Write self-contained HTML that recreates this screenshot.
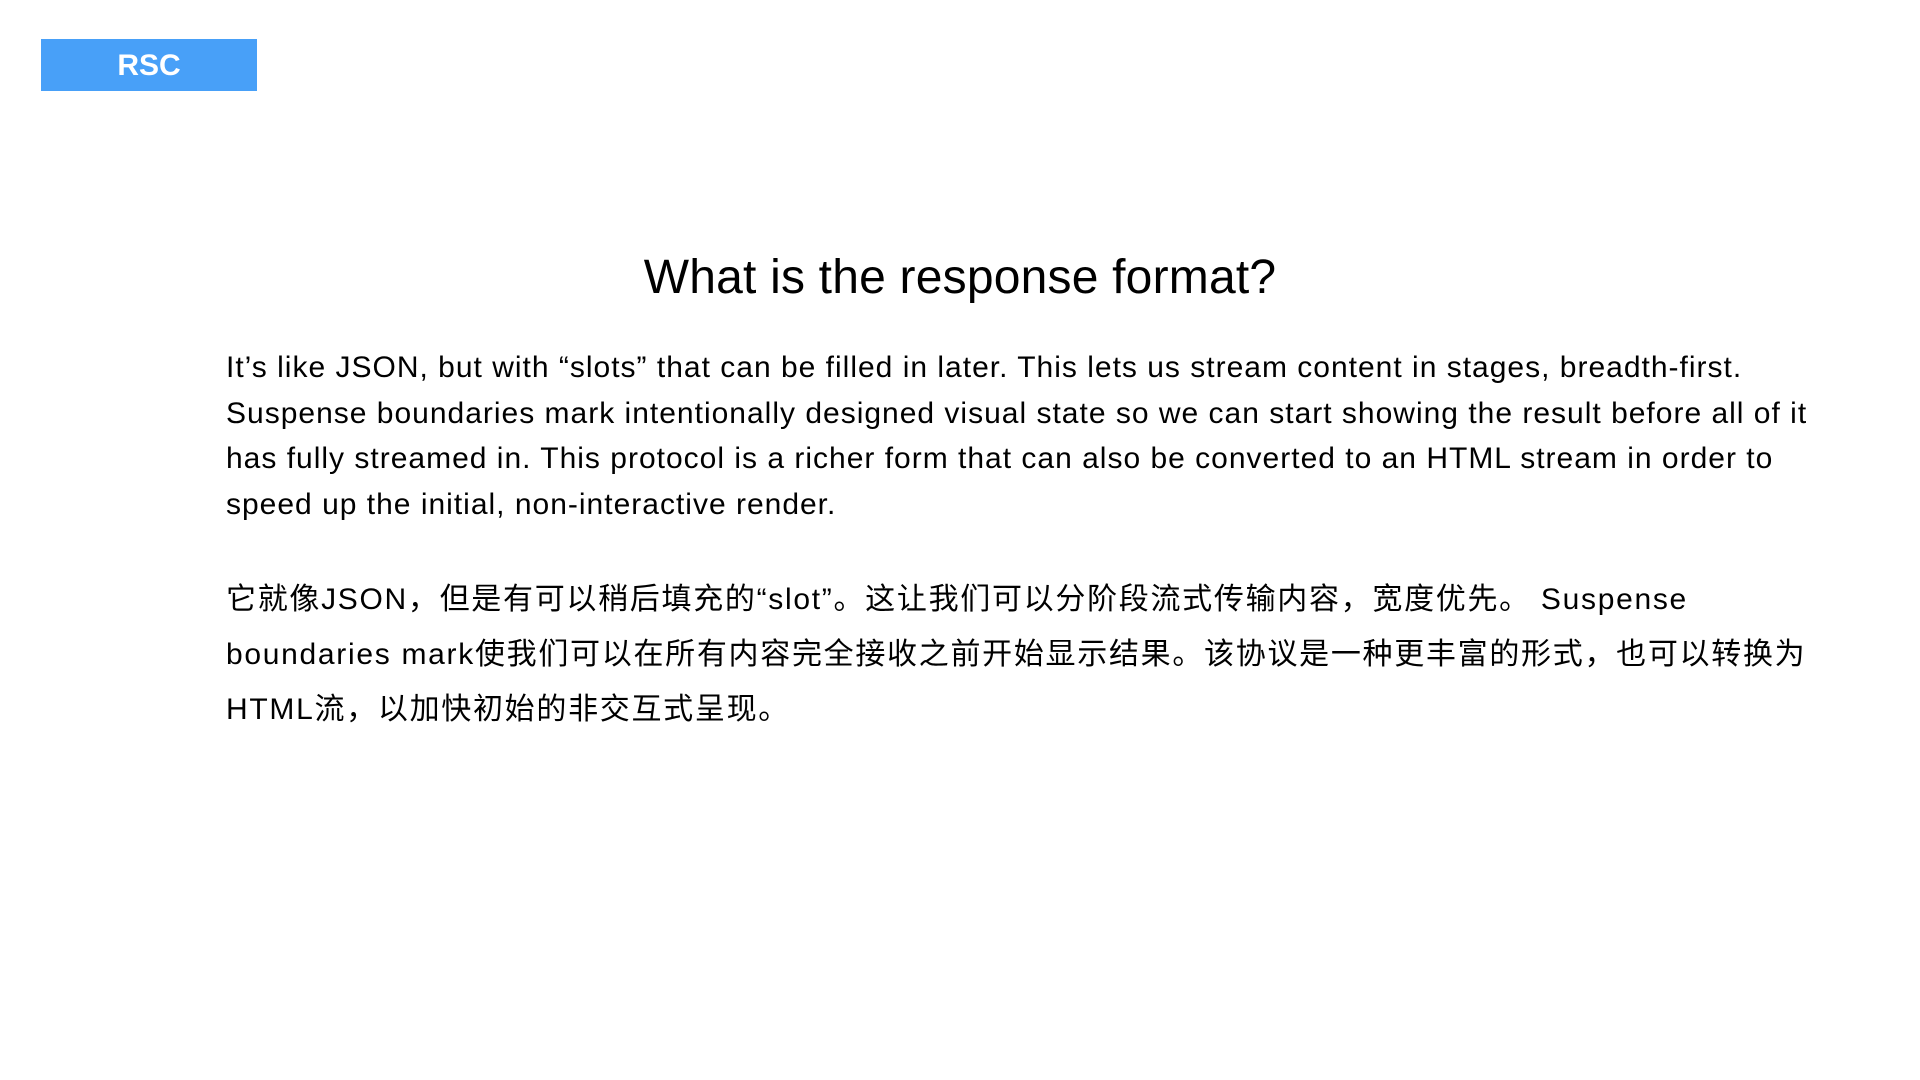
<!DOCTYPE html>
<html><head><meta charset="utf-8"><style>
html,body{margin:0;padding:0;background:#fff;width:1920px;height:1080px;overflow:hidden}
body{font-family:"Liberation Sans","Noto Sans CJK SC",sans-serif;color:#000;position:relative}
.tag{position:absolute;left:41px;top:39px;width:216px;height:52px;background:#48a0f8;color:#fff;font-weight:bold;font-size:30px;text-align:center;line-height:54px}
h1{position:absolute;left:0;width:1920px;top:250px;margin:0;text-align:center;font-weight:normal;font-size:48px;line-height:56px;letter-spacing:0.2px}
.p1{position:absolute;left:226px;top:345px;width:1680px;font-size:30px;line-height:45.5px;margin:0;letter-spacing:1px;white-space:nowrap}
.p2{position:absolute;left:226px;top:572px;width:1680px;font-size:30px;line-height:55px;margin:0;letter-spacing:1.7px;white-space:nowrap}
</style></head><body>
<div class="tag">RSC</div>
<h1>What is the response format?</h1>
<p class="p1">It’s like JSON, but with “slots” that can be filled in later. This lets us stream content in stages, breadth-first.<br>Suspense boundaries mark intentionally designed visual state so we can start showing the result before all of it<br>has fully streamed in. This protocol is a richer form that can also be converted to an HTML stream in order to<br>speed up the initial, non-interactive render.</p>
<p class="p2">它就像JSON，但是有可以稍后填充的“slot”。这让我们可以分阶段流式传输内容，宽度优先。 Suspense<br>boundaries mark使我们可以在所有内容完全接收之前开始显示结果。该协议是一种更丰富的形式，也可以转换为<br>HTML流，以加快初始的非交互式呈现。</p>
</body></html>
